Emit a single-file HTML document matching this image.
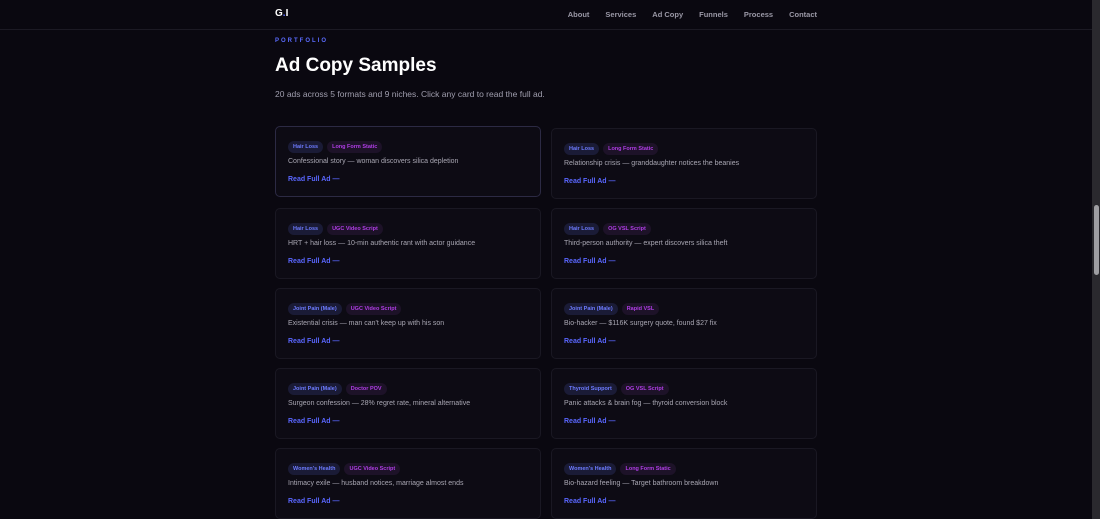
<!DOCTYPE html><html><head><style>
body{margin:0;background:#0a0810;width:1100px;height:519px;overflow:hidden;font-family:"Liberation Sans",sans-serif;position:relative}
.hd{position:absolute;left:0;top:0;width:1092px;height:29px;border-bottom:1px solid #1c1a24}
.logo{position:absolute;left:275px;top:8px;color:#fff;font-weight:bold;font-size:10px}
.logo span{color:#5b6cff}
.nav{position:absolute;right:275px;top:10px;font-size:7.5px;font-weight:bold;color:#9a98a6}
.nav span{margin-left:16px}
.k{position:absolute;left:275px;top:38px;font-size:6px;letter-spacing:2px;font-weight:bold;color:#5b6cff}
h1{position:absolute;left:275px;top:55px;margin:0;color:#fff;font-size:19px}
.sub{position:absolute;left:275px;top:89px;font-size:8.5px;color:#a09eae}
.c{position:absolute;width:264px;height:69px;border:1px solid #1a1823;border-radius:5px;background:#0d0b14}
.c.a{border-color:#2c2a44}
.t{position:absolute;top:14px;left:12px;font-size:5.5px;font-weight:bold}
.t b{display:inline-block;padding:3px 5px;border-radius:6px;margin-right:4px}
.b1{background:#1a1b36;color:#6d7bff}.b2{background:#1d1228;color:#b03de6}
.d{position:absolute;left:12px;top:31px;font-size:7px;color:#a8a6b2}
.l{position:absolute;left:12px;top:49px;font-size:7px;font-weight:bold;color:#5a67ff}
.sb{position:absolute;left:1092px;top:0;width:8px;height:519px;background:#2a292e}
.th{position:absolute;left:1094px;top:205px;width:5px;height:70px;background:#9e9ea2;border-radius:3px}
</style></head><body>
<div class="hd"><div class="logo">G<span>.</span>I</div><div class="nav"><span>About</span><span>Services</span><span>Ad Copy</span><span>Funnels</span><span>Process</span><span>Contact</span></div></div>
<div class="k">PORTFOLIO</div><h1>Ad Copy Samples</h1>
<div class="sub">20 ads across 5 formats and 9 niches. Click any card to read the full ad.</div>
<div class="c a" style="left:275px;top:126px"><div class="t"><b class="b1">Hair Loss</b><b class="b2">Long Form Static</b></div><div class="d">Confessional story — woman discovers silica depletion</div><div class="l">Read Full Ad —</div></div>
<div class="c" style="left:551px;top:128px"><div class="t"><b class="b1">Hair Loss</b><b class="b2">Long Form Static</b></div><div class="d">Relationship crisis — granddaughter notices the beanies</div><div class="l">Read Full Ad —</div></div>
<div class="c" style="left:275px;top:208px"><div class="t"><b class="b1">Hair Loss</b><b class="b2">UGC Video Script</b></div><div class="d">HRT + hair loss — 10-min authentic rant with actor guidance</div><div class="l">Read Full Ad —</div></div>
<div class="c" style="left:551px;top:208px"><div class="t"><b class="b1">Hair Loss</b><b class="b2">OG VSL Script</b></div><div class="d">Third-person authority — expert discovers silica theft</div><div class="l">Read Full Ad —</div></div>
<div class="c" style="left:275px;top:288px"><div class="t"><b class="b1">Joint Pain (Male)</b><b class="b2">UGC Video Script</b></div><div class="d">Existential crisis — man can't keep up with his son</div><div class="l">Read Full Ad —</div></div>
<div class="c" style="left:551px;top:288px"><div class="t"><b class="b1">Joint Pain (Male)</b><b class="b2">Rapid VSL</b></div><div class="d">Bio-hacker — $116K surgery quote, found $27 fix</div><div class="l">Read Full Ad —</div></div>
<div class="c" style="left:275px;top:368px"><div class="t"><b class="b1">Joint Pain (Male)</b><b class="b2">Doctor POV</b></div><div class="d">Surgeon confession — 28% regret rate, mineral alternative</div><div class="l">Read Full Ad —</div></div>
<div class="c" style="left:551px;top:368px"><div class="t"><b class="b1">Thyroid Support</b><b class="b2">OG VSL Script</b></div><div class="d">Panic attacks &amp; brain fog — thyroid conversion block</div><div class="l">Read Full Ad —</div></div>
<div class="c" style="left:275px;top:448px"><div class="t"><b class="b1">Women's Health</b><b class="b2">UGC Video Script</b></div><div class="d">Intimacy exile — husband notices, marriage almost ends</div><div class="l">Read Full Ad —</div></div>
<div class="c" style="left:551px;top:448px"><div class="t"><b class="b1">Women's Health</b><b class="b2">Long Form Static</b></div><div class="d">Bio-hazard feeling — Target bathroom breakdown</div><div class="l">Read Full Ad —</div></div>
<div class="sb"></div><div class="th"></div>
</body></html>
